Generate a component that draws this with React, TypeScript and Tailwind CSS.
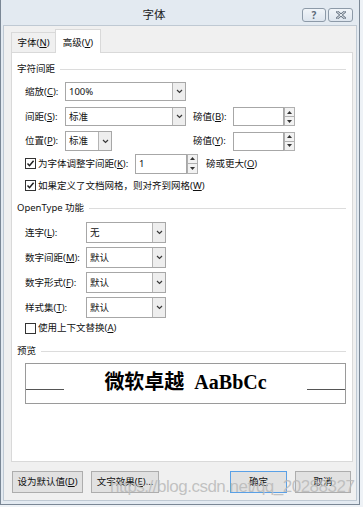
import React from 'react';

// Word "字体" dialog, advanced tab

function Acc({ pre, k, post = '' }: { pre: string; k: string; post?: string }) {
  return (
    <span className="whitespace-nowrap">
      {pre}(<span className="underline">{k}</span>){post}
    </span>
  );
}

function Chevron() {
  return (
    <svg width="7" height="5" viewBox="0 0 7 5">
      <path d="M1 1l2.5 2.5L6 1" fill="none" stroke="#3a3a3a" strokeWidth="1.2" />
    </svg>
  );
}

function Select({ value, box, arrow }: { value: string; box: string; arrow: string }) {
  return (
    <div className={`flex border border-[#a7a7a7] bg-white ${box}`}>
      <div className="flex flex-1 items-center pl-[3px]">{value}</div>
      <div className={`flex items-center justify-center border-l border-[#b4b4b4] bg-[#eeeeee] ${arrow}`}>
        <Chevron />
      </div>
    </div>
  );
}

function Spinner() {
  return (
    <div className="flex h-full w-[11px] flex-col">
      <div className="flex flex-1 items-center justify-center border border-[#b0b0b0] bg-[#f2f2f2]">
        <svg width="5" height="3" viewBox="0 0 5 3">
          <path d="M0 3L2.5 0L5 3Z" fill="#333" />
        </svg>
      </div>
      <div className="flex flex-1 items-center justify-center border border-t-0 border-[#b0b0b0] bg-[#f2f2f2]">
        <svg width="5" height="3" viewBox="0 0 5 3">
          <path d="M0 0L2.5 3L5 0Z" fill="#333" />
        </svg>
      </div>
    </div>
  );
}

function SpinBox({ value = '', box }: { value?: string; box: string }) {
  return (
    <div className={`flex ${box}`}>
      <div className="flex flex-1 items-center border border-[#a7a7a7] bg-white pl-[3px]">{value}</div>
      <Spinner />
    </div>
  );
}

function Check({ on }: { on?: boolean }) {
  return (
    <div className="flex h-[11px] w-[11px] items-center justify-center border border-[#333] bg-white">
      {on && (
        <svg width="9" height="9" viewBox="0 0 9 9">
          <path d="M1.5 4.6l2 2.1L7.6 1.8" fill="none" stroke="#1e1e1e" strokeWidth="1.5" />
        </svg>
      )}
    </div>
  );
}

function Heading({ children }: { children: React.ReactNode }) {
  return (
    <div className="flex h-[16px] items-center pl-[5px] pr-[6px]">
      <span className="whitespace-nowrap">{children}</span>
      <div className="ml-[5px] h-px flex-1 bg-[#dcdcdc]" />
    </div>
  );
}

function Btn({ children, w, primary }: { children: React.ReactNode; w: string; primary?: boolean }) {
  return (
    <div
      className={`flex h-[22px] items-center justify-center border bg-[#e1e1e1] ${w} ${
        primary ? 'border-[#5aa0e6]' : 'border-[#adadad]'
      }`}
    >
      {children}
    </div>
  );
}

export default function App() {
  const opts = [
    { pre: '数字间距', k: 'M', v: '默认' },
    { pre: '数字形式', k: 'F', v: '默认' },
    { pre: '样式集', k: 'T', v: '默认' },
  ];

  return (
    <div className="relative h-[507px] w-[363px] bg-[#eef2f6] font-['Noto_Sans','Noto_Sans_CJK_SC',sans-serif] text-[9.5px] leading-[14px] text-[#111]">
      <div className="flex h-[505px] w-[360px] flex-col border-x border-b border-[#7a8795] bg-[#e3eaf1]">
        {/* title bar */}
        <div className="flex h-[25px] items-start">
          <div className="flex-1 pl-[5px] pt-[7px] text-center text-[11.5px] leading-[16px] text-[#1a1a1a]">字体</div>
          <div className="mr-[6px] mt-[8px] flex gap-[2px]">
            <div className="flex h-[14px] w-[24px] items-center justify-center rounded-[3px] border border-[#8d9aa8] bg-gradient-to-b from-[#f1f5f9] to-[#dde5ee] text-[10px] font-bold leading-none text-[#5e6b7a]">
              ?
            </div>
            <div className="flex h-[14px] w-[25px] items-center justify-center rounded-[3px] border border-[#8d9aa8] bg-gradient-to-b from-[#f1f5f9] to-[#dde5ee]">
              <svg width="10" height="8" viewBox="0 0 10 8">
                <path d="M1.5 1l7 6M8.5 1l-7 6" stroke="#6a7786" strokeWidth="2.6" strokeLinecap="square" />
                <path d="M1.5 1l7 6M8.5 1l-7 6" stroke="#eef2f6" strokeWidth="1" strokeLinecap="square" />
              </svg>
            </div>
          </div>
        </div>

        {/* body */}
        <div className="mx-[2px] flex h-[476px] flex-col border border-[#bfc9d3] bg-[#f0f0f0]">
          {/* tabs */}
          <div className="relative z-10 ml-[7px] mt-[3px] flex h-[23px] items-end">
            <div className="flex h-[20px] w-[44px] items-center justify-center border border-b-0 border-r-0 border-[#d9d9d9] bg-[#f0f0f0]">
              <Acc pre="字体" k="N" />
            </div>
            <div className="-mb-px flex h-[24px] w-[46px] items-center justify-center border border-b-0 border-[#d9d9d9] bg-white pt-[2px]">
              <Acc pre="高级" k="V" />
            </div>
          </div>

          {/* panel */}
          <div className="ml-[7px] flex h-[410px] w-[342px] flex-col border border-[#d9d9d9] bg-white">
            <div className="mt-[8px]">
              <Heading>字符间距</Heading>
            </div>

            <div className="mt-[2px] flex h-[25px] items-center pl-[13px]">
              <div className="w-[40px]">
                <Acc pre="缩放" k="C" post=":" />
              </div>
              <Select value="100%" box="h-[19px] w-[121px]" arrow="w-[13px]" />
            </div>

            <div className="flex h-[25px] items-center pl-[13px]">
              <div className="w-[40px]">
                <Acc pre="间距" k="S" post=":" />
              </div>
              <Select value="标准" box="h-[19px] w-[121px]" arrow="w-[13px]" />
              <div className="ml-[7px] w-[40px]">
                <Acc pre="磅值" k="B" post=":" />
              </div>
              <SpinBox box="h-[19px] w-[62px]" />
            </div>

            <div className="flex h-[24px] items-center pl-[13px]">
              <div className="w-[40px]">
                <Acc pre="位置" k="P" post=":" />
              </div>
              <Select value="标准" box="h-[20px] w-[47px]" arrow="w-[13px]" />
              <div className="ml-[81px] w-[40px]">
                <Acc pre="磅值" k="Y" post=":" />
              </div>
              <SpinBox box="h-[19px] w-[62px]" />
            </div>

            <div className="flex h-[21px] items-center pl-[13px]">
              <Check on />
              <div className="ml-[2px] w-[97px]">
                <Acc pre="为字体调整字间距" k="K" post=":" />
              </div>
              <SpinBox value="1" box="h-[20px] w-[63px]" />
              <div className="ml-[8px]">
                <Acc pre="磅或更大" k="O" />
              </div>
            </div>

            <div className="flex h-[23px] items-center pl-[13px]">
              <Check on />
              <div className="ml-[2px]">
                <Acc pre="如果定义了文档网格，则对齐到网格" k="W" />
              </div>
            </div>

            <div className="mt-[3px]">
              <Heading>OpenType 功能</Heading>
            </div>

            <div className="mt-[4px] flex h-[25px] items-center pl-[13px]">
              <div className="w-[61px]">
                <Acc pre="连字" k="L" post=":" />
              </div>
              <Select value="无" box="h-[21px] w-[80px]" arrow="w-[13px]" />
            </div>
            {opts.map((o) => (
              <div key={o.k} className="flex h-[25px] items-center pl-[13px]">
                <div className="w-[61px]">
                  <Acc pre={o.pre} k={o.k} post=":" />
                </div>
                <Select value={o.v} box="h-[21px] w-[80px]" arrow="w-[13px]" />
              </div>
            ))}

            <div className="flex h-[16px] items-center pl-[13px]">
              <Check />
              <div className="ml-[2px]">
                <Acc pre="使用上下文替换" k="A" />
              </div>
            </div>

            <div className="mt-[7px]">
              <Heading>预览</Heading>
            </div>

            <div className="ml-[13px] mt-[4px] flex h-[41px] w-[321px] border border-[#9a9a9a]">
              <div className="h-[26px] w-[38px] border-b border-[#555]" />
              <div className="flex-1 whitespace-pre pt-[8px] text-center font-['Liberation_Serif','Noto_Sans_CJK_SC',serif] text-[20px] font-bold leading-[20px] text-black">
                {'微软卓越  AaBbCc'}
              </div>
              <div className="h-[26px] w-[38px] border-b border-[#555]" />
            </div>
          </div>

          {/* buttons */}
          <div className="mt-[9px] flex pl-[8px] pr-[5px]">
            <Btn w="w-[71px]">
              <Acc pre="设为默认值" k="D" />
            </Btn>
            <div className="ml-[8px]">
              <Btn w="w-[68px]">
                <Acc pre="文字效果" k="E" post="..." />
              </Btn>
            </div>
            <div className="ml-auto">
              <Btn w="w-[57px]" primary>
                确定
              </Btn>
            </div>
            <div className="ml-[8px]">
              <Btn w="w-[56px]">取消</Btn>
            </div>
          </div>
        </div>
      </div>

      {/* csdn watermark */}
      <div className="pointer-events-none absolute left-[110px] top-[478px] whitespace-nowrap font-['Liberation_Sans',sans-serif] text-[17px] leading-[17px] tracking-[-0.5px] text-[rgba(185,185,185,0.85)]">
        https://blog.csdn.net/qq_20288327
      </div>
    </div>
  );
}
